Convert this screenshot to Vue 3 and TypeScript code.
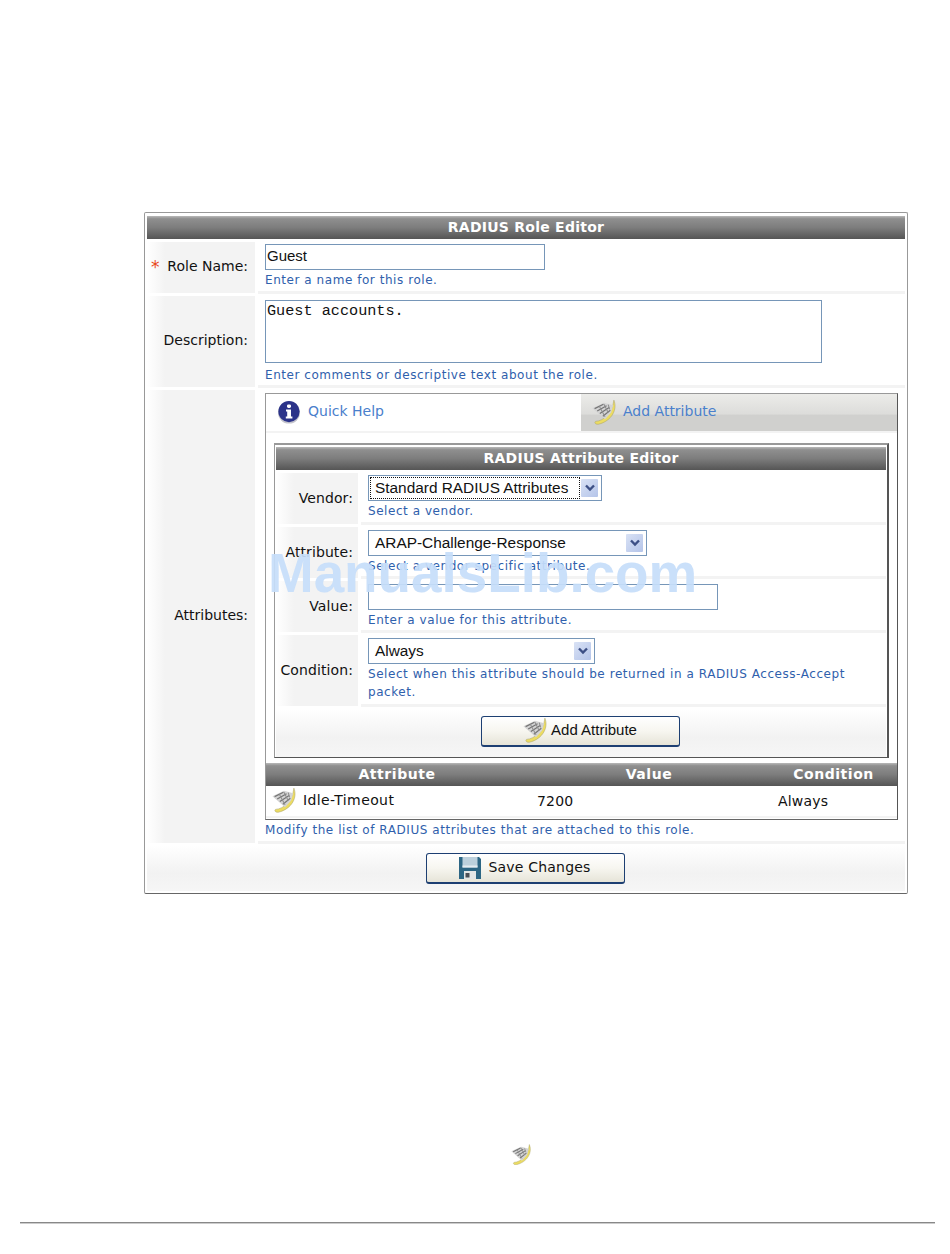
<script setup lang="ts">
interface Field {
  label: string
  kind: 'select' | 'input'
  value: string
  width: number
  hint: string
  cls: string
}

const fields: Field[] = [
  { label: 'Vendor:', kind: 'select', value: 'Standard RADIUS Attributes', width: 234, hint: 'Select a vendor.', cls: 'focused' },
  { label: 'Attribute:', kind: 'select', value: 'ARAP-Challenge-Response', width: 279, hint: 'Select a vendor specific attribute.', cls: '' },
  { label: 'Value:', kind: 'input', value: '', width: 350, hint: 'Enter a value for this attribute.', cls: '' },
  { label: 'Condition:', kind: 'select', value: 'Always', width: 227, hint: 'Select when this attribute should be returned in a RADIUS Access-Accept packet.', cls: 'tall' },
]
</script>

<template>
  <div class="page">
    <svg class="defs" width="0" height="0" aria-hidden="true">
      <defs>
        <symbol id="book" viewBox="0 0 24 24">
          <path d="M21 .6C24.6 9 19.5 20.5 6 23.8C3.4 24 1.8 22.2 3.4 21C11.5 20.6 19.6 12.6 21 .6Z" fill="#ecdc62" stroke="#a8a36a" stroke-width=".5" />
          <path d="M.4 8.4L11.5 3L20.4 5.4L18.4 12.5L12.5 19Z" fill="#d4d4d4" />
          <path d="M2.5 8.8L11 4.6M5 11L14 6M7.5 13.4L16.5 7.6M10.4 16L17.6 10.4" stroke="#757575" stroke-width="1.2" fill="none" />
          <path d="M7 6.5L12.5 16.5M11.5 4.5L15.5 12.5M15.5 5L17 9.5" stroke="#8e8e8e" stroke-width="1" fill="none" />
        </symbol>
      </defs>
    </svg>

    <section class="panel">
      <h1 class="bar title">RADIUS Role Editor</h1>

      <div class="row">
        <div class="label"><span class="req">*</span> Role Name:</div>
        <div class="cell">
          <div class="field name">Guest</div>
          <div class="hint">Enter a name for this role.</div>
        </div>
      </div>

      <div class="row">
        <div class="label">Description:</div>
        <div class="cell">
          <div class="field area">Guest accounts.</div>
          <div class="hint">Enter comments or descriptive text about the role.</div>
        </div>
      </div>

      <div class="row">
        <div class="label">Attributes:</div>
        <div class="cell attrs">
          <div class="tabbox">
            <div class="tabs">
              <div class="tab">
                <svg class="info" viewBox="0 0 24 24" width="24" height="24">
                  <circle cx="12" cy="12.6" r="11" fill="#c4c4cc" />
                  <circle cx="12" cy="11.6" r="10.6" fill="#2b3389" />
                  <rect x="10" y="4.4" width="4" height="3.6" rx="1.4" fill="#fff" />
                  <path d="M9 9.6H14V16.4H15.4V18.4H8.8V16.4H10.2V11.4H9Z" fill="#fff" />
                </svg>
                <span>Quick Help</span>
              </div>
              <div class="tab alt">
                <svg class="bk" width="25" height="26"><use href="#book" /></svg>
                <span>Add Attribute</span>
              </div>
            </div>

            <div class="editor">
              <h2 class="bar title">RADIUS Attribute Editor</h2>
              <div v-for="f in fields" :key="f.label" class="row sub" :class="f.cls">
                <div class="label">{{ f.label }}</div>
                <div class="cell">
                  <div class="field ctl" :style="{ width: f.width + 'px' }">
                    <span class="val">{{ f.value }}</span>
                    <span v-if="f.kind === 'select'" class="arrow">
                      <svg viewBox="0 0 10 8" width="10" height="8">
                        <path d="M1 1.5L5 5.5L9 1.5" fill="none" stroke="#3c4f85" stroke-width="2.4" />
                      </svg>
                    </span>
                  </div>
                  <div class="hint">{{ f.hint }}</div>
                </div>
              </div>
              <div class="actions small">
                <button class="btn" type="button">
                  <svg class="bk" width="25" height="26"><use href="#book" /></svg>
                  <span class="btn-text">Add Attribute</span>
                </button>
              </div>
            </div>

            <div class="bar cols">
              <span>Attribute</span><span>Value</span><span>Condition</span>
            </div>
            <div class="item">
              <div class="first">
                <svg class="bk" width="25" height="26"><use href="#book" /></svg>
                <span>Idle-Timeout</span>
              </div>
              <div class="second">7200</div>
              <div class="third">Always</div>
            </div>
          </div>
          <div class="hint">Modify the list of RADIUS attributes that are attached to this role.</div>
        </div>
      </div>

      <div class="actions">
        <button class="btn save" type="button">
          <svg viewBox="0 0 22 24" width="22" height="24">
            <path d="M0 1H20L22 3V23H0Z" fill="#2d6684" />
            <rect x="3.5" y="1" width="15" height="10.5" fill="#bcd0dc" />
            <rect x="3.5" y="9.5" width="15" height="2" fill="#e6edf1" />
            <rect x="5" y="15" width="12" height="8" fill="#e3e6e6" />
            <rect x="6.5" y="17" width="4" height="4.5" fill="#4b4f55" />
          </svg>
          <span>Save Changes</span>
        </button>
      </div>
    </section>

    <svg class="foot-icon" width="21" height="21"><use href="#book" /></svg>
    <div class="rule"></div>

    <div class="mark">ManualsLib.com</div>
  </div>
</template>

<style scoped>
.page {
  position: relative;
  height: 1254px;
  overflow: hidden;
  background: #fff;
  font-family: "DejaVu Sans", sans-serif;
  font-size: 14px;
  color: #111;
  padding-top: 212px;
  box-sizing: border-box;
}
.defs {
  position: absolute;
}
.panel {
  width: 764px;
  height: 682px;
  margin-left: 144px;
  box-sizing: border-box;
  border: 1px solid #999;
  border-bottom-color: #666;
  border-radius: 2px;
  padding: 3px 2px 2px;
  display: flex;
  flex-direction: column;
  gap: 2px;
}
.bar {
  height: 23px;
  margin: 0 0 1px;
  background: linear-gradient(#b9b9b9 0, #8f8f8f 12%, #7d7d7d 50%, #555 100%);
  color: #fff;
  font: bold 14px/22px "DejaVu Sans", sans-serif;
  letter-spacing: .55px;
  text-align: center;
  flex: none;
}
.title {
  line-height: 23px;
  letter-spacing: .25px;
}
.row {
  display: grid;
  grid-template-columns: 108px 1fr;
  column-gap: 3px;
}
.panel > .row:nth-of-type(1) { height: 52px; }
.panel > .row:nth-of-type(2) { height: 92px; }
.panel > .row:nth-of-type(3) { height: 454px; }
.label {
  margin-bottom: 1px;
  padding: 0 7px 4px 0;
  display: flex;
  align-items: center;
  justify-content: flex-end;
  white-space: pre;
  background: linear-gradient(90deg, #fff 0, #f3f3f3 18px);
}
.req {
  color: #e8471c;
  font-size: 17px;
  margin-right: auto;
  padding-left: 4px;
  line-height: 14px;
  height: 12px;
}
.cell {
  box-sizing: border-box;
  padding: 2px 0 0 7px;
  border-bottom: 3px solid #f3f3f3;
}
.field {
  box-sizing: border-box;
  border: 1px solid #7696b8;
  background: #fff;
  font: 15.4px/24px "Liberation Sans", sans-serif;
  color: #111;
}
.name {
  width: 280px;
  height: 26px;
  padding-left: 1px;
  font-size: 15px;
  line-height: 22px;
}
.area {
  width: 557px;
  height: 63px;
  margin-top: 2px;
  padding: 1px 1px 0;
  font: 15.2px/19px "Liberation Mono", monospace;
  margin-bottom: 2px;
}
.hint {
  font-size: 12px;
  line-height: 18px;
  padding-top: 1px;
  letter-spacing: .55px;
  color: #2f60ac;
}
.attrs {
  padding-top: 3px;
}
.tabbox {
  width: 633px;
  height: 427px;
  box-sizing: border-box;
  border: 1px solid #999;
  border-right-color: #555;
  border-bottom-color: #666;
}
.tabs {
  display: grid;
  grid-template-columns: 315px 1fr;
  height: 37px;
  border-bottom: 2px solid #f3f3f3;
}
.tab {
  display: flex;
  align-items: center;
  gap: 7px;
  padding: 0 0 2px 11px;
  color: #4a80cc;
}
.tab span {
  margin-bottom: 2px;
}
.tab.alt {
  gap: 6px;
  background: linear-gradient(#ecece9 0, #dcdcda 55%, #d0d0ce 56%, #d0d0ce 100%);
}
.bk {
  flex: none;
}
.editor {
  width: 615px;
  height: 315px;
  margin: 10px 0 5px 8px;
  box-sizing: border-box;
  border: 1px solid #999;
  border-top-width: 2px;
  border-right: 2px solid #555;
  border-bottom-color: #555;
  padding: 2px 1px 0;
  display: flex;
  flex-direction: column;
  gap: 2px;
}
.editor .bar {
  margin-bottom: 1px;
}
.sub {
  grid-template-columns: 82px 1fr;
  height: 52px;
}
.sub.tall {
  height: 72px;
}
.sub .label {
  padding-right: 5px;
  padding-bottom: 2px;
  letter-spacing: .1px;
}
.sub .cell {
  padding-top: 3px;
}
.sub.focused .cell {
  padding-top: 2px;
}
.ctl {
  height: 26px;
  display: flex;
  align-items: center;
  justify-content: space-between;
  padding: 0 3px 0 6px;
}
.focused .ctl {
  padding-left: 2px;
}
.focused .val {
  flex: 1;
  margin-right: 2px;
  outline: 1px dotted #111;
  padding: 0 0 0 4px;
  line-height: 20px;
}
.arrow {
  width: 17px;
  height: 18px;
  border-radius: 1px;
  background: linear-gradient(135deg, #d9e2f5, #b4c4e9);
  display: flex;
  align-items: center;
  justify-content: center;
}
.actions {
  flex: 1;
  display: flex;
  align-items: center;
  justify-content: center;
  background: linear-gradient(#fff 0, #f2f2f2 60%, #f6f6f6 100%);
}
.actions.small {
  padding-bottom: 3px;
}
.btn {
  box-sizing: border-box;
  width: 199px;
  height: 31px;
  margin-right: 2px;
  border: 1px solid #1d3f72;
  border-bottom-width: 2px;
  border-radius: 3px;
  background: linear-gradient(#fff 0, #f7f6f0 50%, #e6e4d8 100%);
  display: flex;
  align-items: center;
  justify-content: center;
  gap: 3px;
  padding: 0;
  color: #111;
  font: 15px "Liberation Sans", sans-serif;
}
.btn .bk {
  margin-top: -2px;
}
.btn-text {
  margin-bottom: 4px;
}
.save {
  gap: 7px;
  font: 14px "DejaVu Sans", sans-serif;
  letter-spacing: .2px;
}
.save span {
  margin-bottom: 2px;
}
.cols {
  display: grid;
  grid-template-columns: 262px 242px 127px;
  margin: 0;
}
.item {
  display: grid;
  grid-template-columns: 262px 242px 127px;
  padding-bottom: 3px;
  box-sizing: content-box;
  align-items: center;
  border-bottom: 2px solid #f3f3f3;
  height: 27px;
  letter-spacing: .2px;
}
.first {
  display: flex;
  align-items: center;
  gap: 6px;
  padding-left: 6px;
  letter-spacing: .4px;
}
.second {
  padding: 2px 0 0 9px;
}
.third {
  padding: 2px 0 0 8px;
}
.foot-icon {
  display: block;
  margin: 250px 0 0 511px;
}
.rule {
  margin: 57px 15px 0 20px;
  height: 1px;
  background: #888;
  box-shadow: 0 1px 0 #ccc;
}
.mark {
  position: absolute;
  left: 268px;
  top: 541px;
  font: bold 54.8px/64px "Liberation Sans", sans-serif;
  color: rgba(198, 222, 250, .93);
  pointer-events: none;
}
</style>
